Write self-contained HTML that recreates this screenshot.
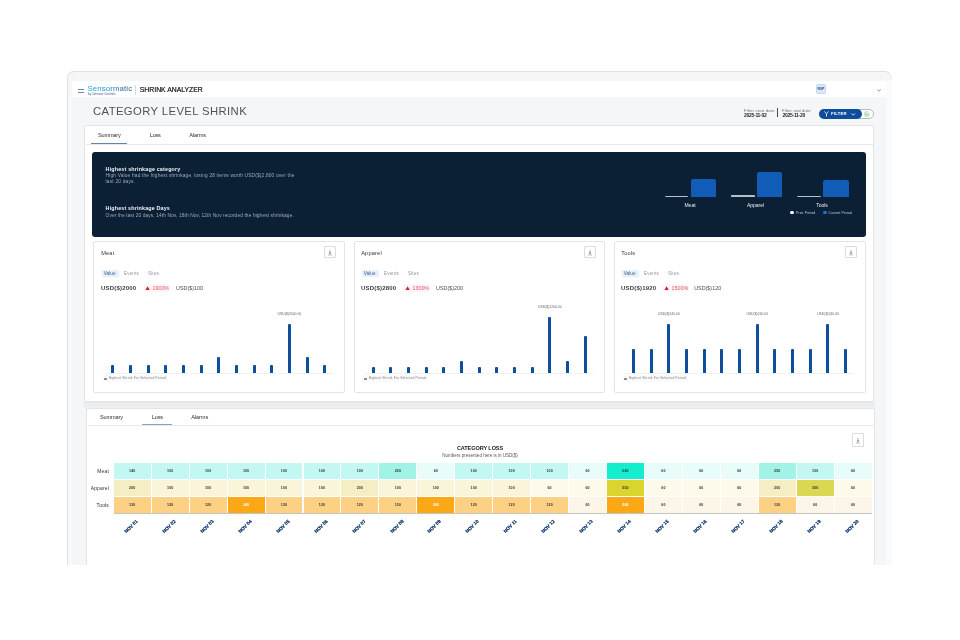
<!DOCTYPE html>
<html><head><meta charset="utf-8"><style>
*{box-sizing:border-box;margin:0;padding:0}
html,body{width:960px;height:640px;overflow:hidden;background:#fff}
body{position:relative;font-family:"Liberation Sans",sans-serif;color:#333}
.a{position:absolute;white-space:nowrap;line-height:1}
#clip{position:absolute;left:0;top:0;width:960px;height:565px;overflow:hidden;will-change:transform}
#frame{position:absolute;left:67px;top:71px;width:825px;height:520px;background:#f5f6f8;border:1px solid #dfe0e2;border-right-color:#eceef0;border-radius:7px 7px 0 0}
.card{position:absolute;background:#fff;border:1px solid #e2e4e8;border-radius:2px}
.tab{font-size:5.6px;color:#2d2f33}
.dl{position:absolute;width:13px;height:13px;border:1px solid #d8dbe0;border-radius:2px;background:#fff}
.bar{position:absolute;background:#0d4f9c;border-radius:1px 1px 0 0}
.cell{position:absolute;font-size:3.6px;color:#333;text-align:center;font-weight:bold;letter-spacing:0.1px}
.xl{position:absolute;font-size:4.6px;color:#173f78;font-weight:bold;text-shadow:0 0 0.25px #173f78;transform-origin:100% 50%;transform:rotate(-45deg)}
</style></head><body>
<div id="clip"><div id="frame"></div>
<div class="a" style="left:68px;top:97px;width:4px;height:470px;background:#f8f9fa"></div>
<div class="a" style="left:886px;top:80px;width:5.5px;height:490px;background:#f9fafb"></div>
<div class="a" style="left:72px;top:81px;width:814px;height:16px;background:#fff"></div>
<div class="a" style="left:78px;top:88.6px;width:5.8px;height:1.2px;background:#6886b0"></div>
<div class="a" style="left:78px;top:91.8px;width:5.8px;height:1.2px;background:#6886b0"></div>
<div class="a" style="left:87.5px;top:85px;font-size:7.8px;letter-spacing:0.12px;background:linear-gradient(90deg,#16a6dc,#1685bd 50%,#1b5586);-webkit-background-clip:text;color:transparent">Sensormatic</div>
<div class="a" style="left:88px;top:92.9px;font-size:2.8px;color:#2f5583;letter-spacing:0.12px">by Johnson Controls</div>
<div class="a" style="left:135.2px;top:85px;width:0.8px;height:9.7px;background:#d5d8dc"></div>
<div class="a" style="left:139.8px;top:87px;font-size:6.9px;color:#2f3237;letter-spacing:-0.03px;text-shadow:0 0 0.2px #2f3237">SHRINK ANALYZER</div>
<div class="a" style="left:816px;top:84.2px;width:10px;height:10.3px;background:#dae8fa;border:0.5px solid #c5d8f0;border-radius:2px"></div>
<div class="a" style="left:817.6px;top:88.2px;font-size:3.5px;color:#2b4a72;font-weight:bold">R0P</div>
<svg class="a" style="left:877.3px;top:88.8px" width="4" height="3" viewBox="0 0 4 3"><path d="M0.3 0.4L2 2.3L3.7 0.4" stroke="#8a8d92" stroke-width="0.9" fill="none"/></svg>
<div class="a" style="left:93px;top:106.1px;font-size:11.3px;color:#505358;letter-spacing:0.39px">CATEGORY LEVEL SHRINK</div>
<div class="a" style="left:744px;top:108.6px;font-size:4.2px;color:#6b6f75;letter-spacing:0.16px">Filter start date</div>
<div class="a" style="left:744px;top:112.8px;font-size:5px;color:#1f2328;font-weight:bold;letter-spacing:-0.28px">2025-11-02</div>
<div class="a" style="left:777px;top:107.8px;width:1px;height:9.3px;background:#3a4a6a"></div>
<div class="a" style="left:782px;top:108.6px;font-size:4.2px;color:#6b6f75;letter-spacing:0.13px">Filter end date</div>
<div class="a" style="left:782.5px;top:112.8px;font-size:5px;color:#1f2328;font-weight:bold;letter-spacing:-0.28px">2025-11-20</div>
<div class="a" style="left:819px;top:109px;width:55px;height:10px;border:0.7px solid #b5bac0;border-radius:5px;background:#fff"></div>
<div class="a" style="left:819px;top:109px;width:43px;height:10px;background:#0f4c9c;border-radius:5px"></div>
<svg class="a" style="left:824px;top:111.4px" width="5" height="6" viewBox="0 0 5 6"><path d="M0.4 0.4L2.5 2.8L4.6 0.4M2.5 2.8V5.6" stroke="#fff" stroke-width="0.8" fill="none"/></svg>
<div class="a" style="left:831px;top:111.5px;font-size:4.2px;color:#fff;font-weight:bold;letter-spacing:0.25px">FILTER</div>
<svg class="a" style="left:851px;top:112.6px" width="5" height="3" viewBox="0 0 5 3"><path d="M0.5 0.4L2.3 2.2L4.1 0.4" stroke="#fff" stroke-width="0.8" fill="none"/></svg>
<svg class="a" style="left:864.3px;top:111px" width="6" height="6" viewBox="0 0 6 6"><path d="M5.3 3A2.3 2.3 0 1 1 3.6 0.8" stroke="#4caf50" stroke-width="0.6" fill="none"/><path d="M1.8 3L2.8 4L5 1.4" stroke="#4caf50" stroke-width="0.6" fill="none"/></svg>
<div class="a" style="left:84px;top:401.5px;width:791px;height:6.5px;background:linear-gradient(#e9eaec,#eff0f2)"></div>
<div class="card" style="left:84px;top:125px;width:790px;height:277px;border-radius:2px"></div>
<div class="a" style="left:86px;top:144px;width:787px;height:1px;background:#e6e8eb"></div>
<div class="a tab" style="left:98px;top:133px;letter-spacing:-0.2px">Summary</div>
<div class="a tab" style="left:149.8px;top:133px;letter-spacing:-0.25px">Loss</div>
<div class="a tab" style="left:189.2px;top:133px;letter-spacing:-0.1px">Alarms</div>
<div class="a" style="left:91px;top:142.7px;width:36px;height:1.1px;background:#6582aa"></div>
<div class="a" style="left:92px;top:152px;width:774px;height:85px;background:#0b1f35;border-radius:3px"></div>
<div class="a" style="left:105.6px;top:166.6px;font-size:5.4px;color:#eef2f7;font-weight:bold;letter-spacing:0.16px">Highest shrinkage category</div>
<div class="a" style="left:105.6px;top:174px;font-size:4.8px;color:#9eabbe;letter-spacing:0.175px">High Value had the highest shrinkage, losing 28 items worth USD($)2,800 over the</div>
<div class="a" style="left:105.6px;top:179.9px;font-size:4.8px;color:#9eabbe;letter-spacing:0.2px">last 20 days.</div>
<div class="a" style="left:105.6px;top:205.8px;font-size:5.4px;color:#eef2f7;font-weight:bold;letter-spacing:0.15px">Highest shrinkage Days</div>
<div class="a" style="left:105.6px;top:213.5px;font-size:4.8px;color:#9eabbe;letter-spacing:0.115px">Over the last 20 days, 14th Nov, 18th Nov, 12th Nov recorded the highest shrinkage.</div>
<div class="a" style="left:665.2px;top:195.8px;width:23.299999999999955px;height:1.5px;background:#b4bfcc;border-radius:1px 1px 0 0"></div>
<div class="a" style="left:690.8px;top:179.20000000000002px;width:25.5px;height:18.1px;background:#115cb6;border-radius:2px 2px 0 0"></div>
<div class="a" style="left:660px;width:60px;text-align:center;top:202.5px;font-size:5px;color:#e8edf3">Meat</div>
<div class="a" style="left:730.8px;top:194.8px;width:24.40000000000009px;height:2.5px;background:#b4bfcc;border-radius:1px 1px 0 0"></div>
<div class="a" style="left:756.9px;top:171.70000000000002px;width:25.600000000000023px;height:25.6px;background:#115cb6;border-radius:2px 2px 0 0"></div>
<div class="a" style="left:725.5px;width:60px;text-align:center;top:202.5px;font-size:5px;color:#e8edf3">Apparel</div>
<div class="a" style="left:796.5px;top:195.8px;width:24.299999999999955px;height:1.5px;background:#b4bfcc;border-radius:1px 1px 0 0"></div>
<div class="a" style="left:822.5px;top:179.60000000000002px;width:26.0px;height:17.7px;background:#115cb6;border-radius:2px 2px 0 0"></div>
<div class="a" style="left:792px;width:60px;text-align:center;top:202.5px;font-size:5px;color:#e8edf3">Tools</div>
<div class="a" style="left:790.4px;top:211.1px;width:3.3px;height:3.3px;border-radius:50%;background:#fff"></div>
<div class="a" style="left:796px;top:211.8px;font-size:3.4px;color:#c6cfdb;letter-spacing:0.12px">Prior Period</div>
<div class="a" style="left:823.3px;top:211.1px;width:3.3px;height:3.3px;border-radius:50%;background:#1d74d8"></div>
<div class="a" style="left:828.4px;top:211.8px;font-size:3.4px;color:#c6cfdb;letter-spacing:0.1px">Current Period</div>
<div class="card" style="left:92.5px;top:240.5px;width:252.10000000000002px;height:152.2px"></div>
<div class="a" style="left:101.2px;top:250.5px;font-size:5.6px;color:#34373c;letter-spacing:0.2px">Meat</div>
<div class="dl" style="left:324px;top:245.7px;width:12.3px;height:12.7px;border-radius:1px"></div>
<svg class="a" style="left:327.15px;top:249.3px" width="6" height="7" viewBox="0 0 6 7"><path d="M3 1V4.6" stroke="#777" stroke-width="0.6"/><path d="M1.6 3.6L3 5L4.4 3.6Z" fill="#777"/><path d="M0.9 5.9H5.1" stroke="#888" stroke-width="0.6"/></svg>
<div class="a" style="left:101.5px;top:269.5px;width:17px;height:7.5px;background:#e6f0fb;border-radius:1.5px"></div>
<div class="a" style="left:103.7px;top:271.8px;font-size:4.6px;color:#41628d;letter-spacing:0.12px">Value</div>
<div class="a" style="left:124.1px;top:271.8px;font-size:4.6px;color:#92969c;letter-spacing:0.12px">Events</div>
<div class="a" style="left:148px;top:271.8px;font-size:4.6px;color:#92969c;letter-spacing:0.12px">Sites</div>
<div class="a" style="left:101px;top:285.3px;font-size:6px;color:#3a3d42;font-weight:bold;letter-spacing:0.2px">USD($)2000</div>
<div class="a" style="left:143.2px;top:283.8px;width:26.5px;height:8.5px;background:#fef5f6;border-radius:2px"></div>
<svg class="a" style="left:145px;top:285.8px" width="5.2" height="4.6" viewBox="0 0 5.2 4.6"><path d="M2.6 0.2L5 4.4H0.2Z" fill="#c8233a"/></svg>
<div class="a" style="left:152.4px;top:285.7px;font-size:5.3px;color:#e0536b;letter-spacing:0.05px">1900%</div>
<div class="a" style="left:176px;top:285.7px;font-size:5.4px;color:#4a4d52">USD($)100</div>
<div class="a" style="left:105px;top:373px;width:228px;height:0.6px;background:#eef0f2"></div>
<div class="bar" style="left:111.20px;top:365px;width:3px;height:8px"></div>
<div class="bar" style="left:128.87px;top:365px;width:3px;height:8px"></div>
<div class="bar" style="left:146.54px;top:365px;width:3px;height:8px"></div>
<div class="bar" style="left:164.21px;top:365px;width:3px;height:8px"></div>
<div class="bar" style="left:181.88px;top:365px;width:3px;height:8px"></div>
<div class="bar" style="left:199.55px;top:365px;width:3px;height:8px"></div>
<div class="bar" style="left:217.22px;top:357px;width:3px;height:16px"></div>
<div class="bar" style="left:234.89px;top:365px;width:3px;height:8px"></div>
<div class="bar" style="left:252.56px;top:365px;width:3px;height:8px"></div>
<div class="bar" style="left:270.23px;top:365px;width:3px;height:8px"></div>
<div class="bar" style="left:287.90px;top:324px;width:3px;height:49px"></div>
<div class="bar" style="left:305.57px;top:357px;width:3px;height:16px"></div>
<div class="bar" style="left:323.24px;top:365px;width:3px;height:8px"></div>
<div class="a" style="left:269.40px;width:40px;text-align:center;top:312.5px;font-size:3.4px;color:#666">USD($)2000.00</div>
<div class="a" style="left:102px;top:375px;width:66px;height:7px;background:#fafafa;border-radius:1px"></div>
<div class="a" style="left:104.3px;top:377.5px;width:2.3px;height:2px;background:#888;border-radius:0.5px"></div>
<div class="a" style="left:108.8px;top:377.3px;font-size:3.3px;color:#80838a;letter-spacing:0.17px">Highest Shrink For Selected Period</div>
<div class="card" style="left:353.5px;top:240.5px;width:251.70000000000005px;height:152.2px"></div>
<div class="a" style="left:361.2px;top:250.5px;font-size:5.6px;color:#34373c;letter-spacing:0.2px">Apparel</div>
<div class="dl" style="left:584px;top:245.7px;width:12.3px;height:12.7px;border-radius:1px"></div>
<svg class="a" style="left:587.15px;top:249.3px" width="6" height="7" viewBox="0 0 6 7"><path d="M3 1V4.6" stroke="#777" stroke-width="0.6"/><path d="M1.6 3.6L3 5L4.4 3.6Z" fill="#777"/><path d="M0.9 5.9H5.1" stroke="#888" stroke-width="0.6"/></svg>
<div class="a" style="left:361.5px;top:269.5px;width:17px;height:7.5px;background:#e6f0fb;border-radius:1.5px"></div>
<div class="a" style="left:363.7px;top:271.8px;font-size:4.6px;color:#41628d;letter-spacing:0.12px">Value</div>
<div class="a" style="left:384.1px;top:271.8px;font-size:4.6px;color:#92969c;letter-spacing:0.12px">Events</div>
<div class="a" style="left:408px;top:271.8px;font-size:4.6px;color:#92969c;letter-spacing:0.12px">Sites</div>
<div class="a" style="left:361px;top:285.3px;font-size:6px;color:#3a3d42;font-weight:bold;letter-spacing:0.2px">USD($)2800</div>
<div class="a" style="left:403.2px;top:283.8px;width:26.5px;height:8.5px;background:#fef5f6;border-radius:2px"></div>
<svg class="a" style="left:405px;top:285.8px" width="5.2" height="4.6" viewBox="0 0 5.2 4.6"><path d="M2.6 0.2L5 4.4H0.2Z" fill="#c8233a"/></svg>
<div class="a" style="left:412.4px;top:285.7px;font-size:5.3px;color:#e0536b;letter-spacing:0.05px">1300%</div>
<div class="a" style="left:436px;top:285.7px;font-size:5.4px;color:#4a4d52">USD($)200</div>
<div class="a" style="left:365px;top:373px;width:228px;height:0.6px;background:#eef0f2"></div>
<div class="bar" style="left:371.60px;top:367px;width:3px;height:6px"></div>
<div class="bar" style="left:389.27px;top:367px;width:3px;height:6px"></div>
<div class="bar" style="left:406.94px;top:367px;width:3px;height:6px"></div>
<div class="bar" style="left:424.61px;top:367px;width:3px;height:6px"></div>
<div class="bar" style="left:442.28px;top:367px;width:3px;height:6px"></div>
<div class="bar" style="left:459.95px;top:361px;width:3px;height:12px"></div>
<div class="bar" style="left:477.62px;top:367px;width:3px;height:6px"></div>
<div class="bar" style="left:495.29px;top:367px;width:3px;height:6px"></div>
<div class="bar" style="left:512.96px;top:367px;width:3px;height:6px"></div>
<div class="bar" style="left:530.63px;top:367px;width:3px;height:6px"></div>
<div class="bar" style="left:548.30px;top:317px;width:3px;height:56px"></div>
<div class="bar" style="left:565.97px;top:361px;width:3px;height:12px"></div>
<div class="bar" style="left:583.64px;top:336px;width:3px;height:37px"></div>
<div class="a" style="left:529.80px;width:40px;text-align:center;top:305.5px;font-size:3.4px;color:#666">USD($)1200.00</div>
<div class="a" style="left:362px;top:375px;width:66px;height:7px;background:#fafafa;border-radius:1px"></div>
<div class="a" style="left:364.3px;top:377.5px;width:2.3px;height:2px;background:#888;border-radius:0.5px"></div>
<div class="a" style="left:368.8px;top:377.3px;font-size:3.3px;color:#80838a;letter-spacing:0.17px">Highest Shrink For Selected Period</div>
<div class="card" style="left:613.5px;top:240.5px;width:252.10000000000002px;height:152.2px"></div>
<div class="a" style="left:621.2px;top:250.5px;font-size:5.6px;color:#34373c;letter-spacing:0.2px">Tools</div>
<div class="dl" style="left:845px;top:245.7px;width:12.3px;height:12.7px;border-radius:1px"></div>
<svg class="a" style="left:848.15px;top:249.3px" width="6" height="7" viewBox="0 0 6 7"><path d="M3 1V4.6" stroke="#777" stroke-width="0.6"/><path d="M1.6 3.6L3 5L4.4 3.6Z" fill="#777"/><path d="M0.9 5.9H5.1" stroke="#888" stroke-width="0.6"/></svg>
<div class="a" style="left:621.5px;top:269.5px;width:17px;height:7.5px;background:#e6f0fb;border-radius:1.5px"></div>
<div class="a" style="left:623.7px;top:271.8px;font-size:4.6px;color:#41628d;letter-spacing:0.12px">Value</div>
<div class="a" style="left:644.1px;top:271.8px;font-size:4.6px;color:#92969c;letter-spacing:0.12px">Events</div>
<div class="a" style="left:668px;top:271.8px;font-size:4.6px;color:#92969c;letter-spacing:0.12px">Sites</div>
<div class="a" style="left:621px;top:285.3px;font-size:6px;color:#3a3d42;font-weight:bold;letter-spacing:0.2px">USD($)1920</div>
<div class="a" style="left:662.3000000000001px;top:283.8px;width:26.5px;height:8.5px;background:#fef5f6;border-radius:2px"></div>
<svg class="a" style="left:664.1px;top:285.8px" width="5.2" height="4.6" viewBox="0 0 5.2 4.6"><path d="M2.6 0.2L5 4.4H0.2Z" fill="#c8233a"/></svg>
<div class="a" style="left:671.5px;top:285.7px;font-size:5.3px;color:#e0536b;letter-spacing:0.05px">1500%</div>
<div class="a" style="left:694.2px;top:285.7px;font-size:5.4px;color:#4a4d52">USD($)120</div>
<div class="a" style="left:625px;top:373px;width:229px;height:0.6px;background:#eef0f2"></div>
<div class="bar" style="left:632.10px;top:349px;width:3px;height:24px"></div>
<div class="bar" style="left:649.77px;top:349px;width:3px;height:24px"></div>
<div class="bar" style="left:667.44px;top:324px;width:3px;height:49px"></div>
<div class="bar" style="left:685.11px;top:349px;width:3px;height:24px"></div>
<div class="bar" style="left:702.78px;top:349px;width:3px;height:24px"></div>
<div class="bar" style="left:720.45px;top:349px;width:3px;height:24px"></div>
<div class="bar" style="left:738.12px;top:349px;width:3px;height:24px"></div>
<div class="bar" style="left:755.79px;top:324px;width:3px;height:49px"></div>
<div class="bar" style="left:773.46px;top:349px;width:3px;height:24px"></div>
<div class="bar" style="left:791.13px;top:349px;width:3px;height:24px"></div>
<div class="bar" style="left:808.80px;top:349px;width:3px;height:24px"></div>
<div class="bar" style="left:826.47px;top:324px;width:3px;height:49px"></div>
<div class="bar" style="left:844.14px;top:349px;width:3px;height:24px"></div>
<div class="a" style="left:648.94px;width:40px;text-align:center;top:312.5px;font-size:3.4px;color:#666">USD($)240.00</div>
<div class="a" style="left:737.29px;width:40px;text-align:center;top:312.5px;font-size:3.4px;color:#666">USD($)240.00</div>
<div class="a" style="left:807.97px;width:40px;text-align:center;top:312.5px;font-size:3.4px;color:#666">USD($)240.00</div>
<div class="a" style="left:622px;top:375px;width:66px;height:7px;background:#fafafa;border-radius:1px"></div>
<div class="a" style="left:624.3px;top:377.5px;width:2.3px;height:2px;background:#888;border-radius:0.5px"></div>
<div class="a" style="left:628.8px;top:377.3px;font-size:3.3px;color:#80838a;letter-spacing:0.17px">Highest Shrink For Selected Period</div>
<div class="card" style="left:86.3px;top:407.8px;width:788.7px;height:200px;border-radius:1px"></div>
<div class="a" style="left:88px;top:425px;width:786px;height:1px;background:#e6e8eb"></div>
<div class="a tab" style="left:100px;top:415px;letter-spacing:-0.15px">Summary</div>
<div class="a tab" style="left:152px;top:415px;letter-spacing:-0.25px">Loss</div>
<div class="a tab" style="left:191.3px;top:415px;letter-spacing:-0.1px">Alarms</div>
<div class="a" style="left:142.2px;top:424.3px;width:30px;height:1.2px;background:#88a2c2"></div>
<div class="dl" style="left:852.4px;top:433.2px;width:11.8px;height:13.4px;border-radius:1px"></div>
<svg class="a" style="left:855.3px;top:437px" width="6" height="7" viewBox="0 0 6 7"><path d="M3 1V4.6" stroke="#777" stroke-width="0.6"/><path d="M1.6 3.6L3 5L4.4 3.6Z" fill="#777"/><path d="M0.9 5.9H5.1" stroke="#888" stroke-width="0.6"/></svg>
<div class="a" style="left:430px;width:100px;text-align:center;top:445.6px;font-size:5.6px;color:#222;font-weight:bold;letter-spacing:-0.12px">CATEGORY LOSS</div>
<div class="a" style="left:400px;width:160px;text-align:center;top:454px;font-size:4.5px;color:#555">Numbers presented here is in USD($)</div>
<div class="a" style="left:60px;width:49px;text-align:right;top:469.6px;font-size:4.9px;color:#2d3035;letter-spacing:0.2px">Meat</div>
<div class="cell" style="left:113.80px;top:463px;width:36.94px;height:15.8px;background:#c3f8f2;padding-top:6.1px;color:#333">140</div>
<div class="cell" style="left:151.74px;top:463px;width:36.94px;height:15.8px;background:#c3f8f2;padding-top:6.1px;color:#333">100</div>
<div class="cell" style="left:189.68px;top:463px;width:36.94px;height:15.8px;background:#c3f8f2;padding-top:6.1px;color:#333">100</div>
<div class="cell" style="left:227.62px;top:463px;width:36.94px;height:15.8px;background:#c3f8f2;padding-top:6.1px;color:#333">100</div>
<div class="cell" style="left:265.56px;top:463px;width:36.94px;height:15.8px;background:#c3f8f2;padding-top:6.1px;color:#333">100</div>
<div class="cell" style="left:303.50px;top:463px;width:36.94px;height:15.8px;background:#c3f8f2;padding-top:6.1px;color:#333">100</div>
<div class="cell" style="left:341.44px;top:463px;width:36.94px;height:15.8px;background:#c3f8f2;padding-top:6.1px;color:#333">100</div>
<div class="cell" style="left:379.38px;top:463px;width:36.94px;height:15.8px;background:#a0f3e6;padding-top:6.1px;color:#333">250</div>
<div class="cell" style="left:417.32px;top:463px;width:36.94px;height:15.8px;background:#e8fcfa;padding-top:6.1px;color:#333">60</div>
<div class="cell" style="left:455.26px;top:463px;width:36.94px;height:15.8px;background:#c3f8f2;padding-top:6.1px;color:#333">100</div>
<div class="cell" style="left:493.20px;top:463px;width:36.94px;height:15.8px;background:#c3f8f2;padding-top:6.1px;color:#333">100</div>
<div class="cell" style="left:531.14px;top:463px;width:36.94px;height:15.8px;background:#c3f8f2;padding-top:6.1px;color:#333">100</div>
<div class="cell" style="left:569.08px;top:463px;width:36.94px;height:15.8px;background:#e8fcfa;padding-top:6.1px;color:#333">60</div>
<div class="cell" style="left:607.02px;top:463px;width:36.94px;height:15.8px;background:#14eecf;padding-top:6.1px;color:#1c2f4a">640</div>
<div class="cell" style="left:644.96px;top:463px;width:36.94px;height:15.8px;background:#e8fcfa;padding-top:6.1px;color:#333">60</div>
<div class="cell" style="left:682.90px;top:463px;width:36.94px;height:15.8px;background:#e8fcfa;padding-top:6.1px;color:#333">60</div>
<div class="cell" style="left:720.84px;top:463px;width:36.94px;height:15.8px;background:#e8fcfa;padding-top:6.1px;color:#333">60</div>
<div class="cell" style="left:758.78px;top:463px;width:36.94px;height:15.8px;background:#a0f3e6;padding-top:6.1px;color:#333">250</div>
<div class="cell" style="left:796.72px;top:463px;width:36.94px;height:15.8px;background:#c3f8f2;padding-top:6.1px;color:#333">100</div>
<div class="cell" style="left:834.66px;top:463px;width:36.94px;height:15.8px;background:#e8fcfa;padding-top:6.1px;color:#333">60</div>
<div class="a" style="left:60px;width:49px;text-align:right;top:486.6px;font-size:4.9px;color:#2d3035;letter-spacing:0.2px">Apparel</div>
<div class="cell" style="left:113.80px;top:480px;width:36.94px;height:15.8px;background:#f5eec4;padding-top:6.1px;color:#333">200</div>
<div class="cell" style="left:151.74px;top:480px;width:36.94px;height:15.8px;background:#faf5da;padding-top:6.1px;color:#333">100</div>
<div class="cell" style="left:189.68px;top:480px;width:36.94px;height:15.8px;background:#faf5da;padding-top:6.1px;color:#333">100</div>
<div class="cell" style="left:227.62px;top:480px;width:36.94px;height:15.8px;background:#faf5da;padding-top:6.1px;color:#333">100</div>
<div class="cell" style="left:265.56px;top:480px;width:36.94px;height:15.8px;background:#faf5da;padding-top:6.1px;color:#333">100</div>
<div class="cell" style="left:303.50px;top:480px;width:36.94px;height:15.8px;background:#faf5da;padding-top:6.1px;color:#333">100</div>
<div class="cell" style="left:341.44px;top:480px;width:36.94px;height:15.8px;background:#f5eec4;padding-top:6.1px;color:#333">200</div>
<div class="cell" style="left:379.38px;top:480px;width:36.94px;height:15.8px;background:#faf5da;padding-top:6.1px;color:#333">100</div>
<div class="cell" style="left:417.32px;top:480px;width:36.94px;height:15.8px;background:#faf5da;padding-top:6.1px;color:#333">100</div>
<div class="cell" style="left:455.26px;top:480px;width:36.94px;height:15.8px;background:#faf5da;padding-top:6.1px;color:#333">100</div>
<div class="cell" style="left:493.20px;top:480px;width:36.94px;height:15.8px;background:#faf5da;padding-top:6.1px;color:#333">100</div>
<div class="cell" style="left:531.14px;top:480px;width:36.94px;height:15.8px;background:#fdfaec;padding-top:6.1px;color:#333">60</div>
<div class="cell" style="left:569.08px;top:480px;width:36.94px;height:15.8px;background:#fdfaec;padding-top:6.1px;color:#333">60</div>
<div class="cell" style="left:607.02px;top:480px;width:36.94px;height:15.8px;background:#d9d52e;padding-top:6.1px;color:#333">550</div>
<div class="cell" style="left:644.96px;top:480px;width:36.94px;height:15.8px;background:#fdfaec;padding-top:6.1px;color:#333">60</div>
<div class="cell" style="left:682.90px;top:480px;width:36.94px;height:15.8px;background:#fdfaec;padding-top:6.1px;color:#333">60</div>
<div class="cell" style="left:720.84px;top:480px;width:36.94px;height:15.8px;background:#fdfaec;padding-top:6.1px;color:#333">60</div>
<div class="cell" style="left:758.78px;top:480px;width:36.94px;height:15.8px;background:#f5eec4;padding-top:6.1px;color:#333">200</div>
<div class="cell" style="left:796.72px;top:480px;width:36.94px;height:15.8px;background:#dcd752;padding-top:6.1px;color:#333">300</div>
<div class="cell" style="left:834.66px;top:480px;width:36.94px;height:15.8px;background:#fdfaec;padding-top:6.1px;color:#333">60</div>
<div class="a" style="left:60px;width:49px;text-align:right;top:503.6px;font-size:4.9px;color:#2d3035;letter-spacing:0.2px">Tools</div>
<div class="cell" style="left:113.80px;top:497px;width:36.94px;height:15.8px;background:#fdd184;padding-top:6.1px;color:#333">120</div>
<div class="cell" style="left:151.74px;top:497px;width:36.94px;height:15.8px;background:#fdd184;padding-top:6.1px;color:#333">120</div>
<div class="cell" style="left:189.68px;top:497px;width:36.94px;height:15.8px;background:#fdd184;padding-top:6.1px;color:#333">120</div>
<div class="cell" style="left:227.62px;top:497px;width:36.94px;height:15.8px;background:#fca716;padding-top:6.1px;color:#fff">240</div>
<div class="cell" style="left:265.56px;top:497px;width:36.94px;height:15.8px;background:#fdd184;padding-top:6.1px;color:#333">120</div>
<div class="cell" style="left:303.50px;top:497px;width:36.94px;height:15.8px;background:#fdd184;padding-top:6.1px;color:#333">120</div>
<div class="cell" style="left:341.44px;top:497px;width:36.94px;height:15.8px;background:#fdd184;padding-top:6.1px;color:#333">120</div>
<div class="cell" style="left:379.38px;top:497px;width:36.94px;height:15.8px;background:#fdd184;padding-top:6.1px;color:#333">120</div>
<div class="cell" style="left:417.32px;top:497px;width:36.94px;height:15.8px;background:#fca716;padding-top:6.1px;color:#fff">240</div>
<div class="cell" style="left:455.26px;top:497px;width:36.94px;height:15.8px;background:#fdd184;padding-top:6.1px;color:#333">120</div>
<div class="cell" style="left:493.20px;top:497px;width:36.94px;height:15.8px;background:#fdd184;padding-top:6.1px;color:#333">120</div>
<div class="cell" style="left:531.14px;top:497px;width:36.94px;height:15.8px;background:#fdd184;padding-top:6.1px;color:#333">120</div>
<div class="cell" style="left:569.08px;top:497px;width:36.94px;height:15.8px;background:#fdf5e8;padding-top:6.1px;color:#333">60</div>
<div class="cell" style="left:607.02px;top:497px;width:36.94px;height:15.8px;background:#fca716;padding-top:6.1px;color:#fff">240</div>
<div class="cell" style="left:644.96px;top:497px;width:36.94px;height:15.8px;background:#fdf5e8;padding-top:6.1px;color:#333">60</div>
<div class="cell" style="left:682.90px;top:497px;width:36.94px;height:15.8px;background:#fdf5e8;padding-top:6.1px;color:#333">60</div>
<div class="cell" style="left:720.84px;top:497px;width:36.94px;height:15.8px;background:#fdf5e8;padding-top:6.1px;color:#333">60</div>
<div class="cell" style="left:758.78px;top:497px;width:36.94px;height:15.8px;background:#fdd184;padding-top:6.1px;color:#333">120</div>
<div class="cell" style="left:796.72px;top:497px;width:36.94px;height:15.8px;background:#fdf5e8;padding-top:6.1px;color:#333">60</div>
<div class="cell" style="left:834.66px;top:497px;width:36.94px;height:15.8px;background:#fdf5e8;padding-top:6.1px;color:#333">60</div>
<div class="a" style="left:113.8px;top:513px;width:757.8px;height:0.8px;background:#c4c4c4"></div>
<div class="xl" style="left:112.97px;width:24px;text-align:right;top:518px;font-size:4.7px">NOV 01</div>
<div class="xl" style="left:150.91px;width:24px;text-align:right;top:518px;font-size:4.7px">NOV 02</div>
<div class="xl" style="left:188.85px;width:24px;text-align:right;top:518px;font-size:4.7px">NOV 03</div>
<div class="xl" style="left:226.79px;width:24px;text-align:right;top:518px;font-size:4.7px">NOV 04</div>
<div class="xl" style="left:264.73px;width:24px;text-align:right;top:518px;font-size:4.7px">NOV 05</div>
<div class="xl" style="left:302.67px;width:24px;text-align:right;top:518px;font-size:4.7px">NOV 06</div>
<div class="xl" style="left:340.61px;width:24px;text-align:right;top:518px;font-size:4.7px">NOV 07</div>
<div class="xl" style="left:378.55px;width:24px;text-align:right;top:518px;font-size:4.7px">NOV 08</div>
<div class="xl" style="left:416.49px;width:24px;text-align:right;top:518px;font-size:4.7px">NOV 09</div>
<div class="xl" style="left:454.43px;width:24px;text-align:right;top:518px;font-size:4.7px">NOV 10</div>
<div class="xl" style="left:492.37px;width:24px;text-align:right;top:518px;font-size:4.7px">NOV 11</div>
<div class="xl" style="left:530.31px;width:24px;text-align:right;top:518px;font-size:4.7px">NOV 12</div>
<div class="xl" style="left:568.25px;width:24px;text-align:right;top:518px;font-size:4.7px">NOV 13</div>
<div class="xl" style="left:606.19px;width:24px;text-align:right;top:518px;font-size:4.7px">NOV 14</div>
<div class="xl" style="left:644.13px;width:24px;text-align:right;top:518px;font-size:4.7px">NOV 15</div>
<div class="xl" style="left:682.07px;width:24px;text-align:right;top:518px;font-size:4.7px">NOV 16</div>
<div class="xl" style="left:720.01px;width:24px;text-align:right;top:518px;font-size:4.7px">NOV 17</div>
<div class="xl" style="left:757.95px;width:24px;text-align:right;top:518px;font-size:4.7px">NOV 18</div>
<div class="xl" style="left:795.89px;width:24px;text-align:right;top:518px;font-size:4.7px">NOV 19</div>
<div class="xl" style="left:833.83px;width:24px;text-align:right;top:518px;font-size:4.7px">NOV 20</div>
</div>
</body></html>
